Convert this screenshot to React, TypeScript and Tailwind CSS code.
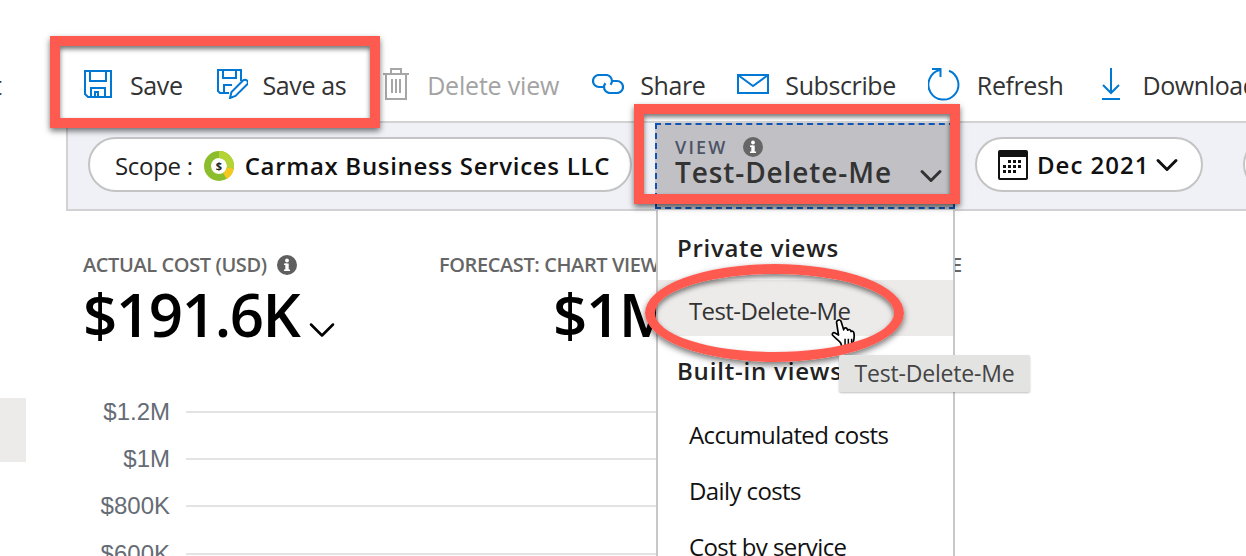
import { ChevronDown } from "lucide-react";

const blue = "#0078d4";

function SaveIcon() {
  return (
    <svg width="28" height="28" viewBox="0 0 28 28" fill="none" stroke={blue} strokeWidth="2">
      <path d="M1 1h26v26H4l-3-3z" />
      <path d="M6 1v10h16V1" />
      <path d="M7 27v-9h14v9" />
      <path d="M11 27v-5h3v5" />
    </svg>
  );
}

function SaveAsIcon() {
  return (
    <svg width="31" height="30" viewBox="0 0 31 30" fill="none" stroke={blue} strokeWidth="2">
      <path d="M12 24H3l-2-2V1h23v11" />
      <path d="M6 1v8h13V1" />
      <path d="M7 24v-8h8" />
      <path d="M13 29l1.500-6L26 11.500a2.800 2.800 0 0 1 4 4L18.500 27z" />
    </svg>
  );
}

function TrashIcon() {
  return (
    <svg width="26" height="32" viewBox="0 0 26 32" fill="none" stroke="#a6a6a6" strokeWidth="2">
      <path d="M0 6h26" />
      <path d="M8 6V1h10v5" />
      <path d="M3 6v25h20V6" />
      <path d="M9 11v14M13 11v14M17 11v14" />
    </svg>
  );
}

function ShareIcon() {
  return (
    <svg width="32" height="20" viewBox="0 0 32 20" fill="none" stroke={blue} strokeWidth="2.2">
      <path d="M12 13H7a6 6 0 0 1 0-12h7a6 6 0 0 1 6 6c0 1.500-.6 2.800-1.500 3.800" />
      <path d="M20 7h5a6 6 0 0 1 0 12h-7a6 6 0 0 1-6-6c0-1.500.6-2.800 1.500-3.800" />
    </svg>
  );
}

function MailIcon() {
  return (
    <svg width="32" height="20" viewBox="0 0 32 20" fill="none" stroke={blue} strokeWidth="2">
      <rect x="1" y="1" width="30" height="18" />
      <path d="M1 1l15 11L31 1" />
    </svg>
  );
}

function RefreshIcon() {
  return (
    <svg width="33" height="33" viewBox="0 0 33 33" fill="none" stroke={blue} strokeWidth="2">
      <path d="M21 2.700A15 15 0 1 1 12 2" />
      <path d="M4 1h8.500v8" />
    </svg>
  );
}

function DownloadIcon() {
  return (
    <svg width="20" height="32" viewBox="0 0 20 32" fill="none" stroke={blue} strokeWidth="2">
      <path d="M10 0v25" />
      <path d="M2 17l8 8 8-8" />
      <path d="M1 31h18" />
    </svg>
  );
}

function CalendarIcon() {
  return (
    <svg width="30" height="30" viewBox="0 0 30 30">
      <rect x="0" y="0" width="30" height="30" rx="2" fill="#111" />
      <rect x="2" y="7" width="26" height="21" fill="#fff" />
      <g fill="#111">
        <rect x="10" y="10" width="3" height="3" />
        <rect x="15" y="10" width="3" height="3" />
        <rect x="20" y="10" width="3" height="3" />
        <rect x="5" y="15" width="3" height="3" />
        <rect x="10" y="15" width="3" height="3" />
        <rect x="15" y="15" width="3" height="3" />
        <rect x="20" y="15" width="3" height="3" />
        <rect x="5" y="20" width="3" height="3" />
        <rect x="10" y="20" width="3" height="3" />
        <rect x="15" y="20" width="3" height="3" />
      </g>
    </svg>
  );
}

function InfoIcon({ color = "#666" }: { color?: string }) {
  return (
    <svg width="20" height="20" viewBox="0 0 20 20">
      <circle cx="10" cy="10" r="10" fill={color} />
      <rect x="8.300" y="8.500" width="3.400" height="7.500" fill="#fff" />
      <rect x="7" y="8.500" width="3" height="1.500" fill="#fff" />
      <rect x="7" y="14.500" width="6" height="1.500" fill="#fff" />
      <circle cx="10" cy="5.500" r="1.900" fill="#fff" />
    </svg>
  );
}

function ScopeIcon() {
  return (
    <svg width="30" height="30" viewBox="0 0 30 30" className="shrink-0">
      <circle cx="15" cy="15" r="11.500" fill="none" stroke="#8cbd2c" strokeWidth="7" />
      <path d="M15 3.500A11.500 11.500 0 0 1 26.300 17" fill="none" stroke="#b4d334" strokeWidth="7" />
      <path d="M26.300 17A11.500 11.500 0 0 1 21 25" fill="none" stroke="#f6c81f" strokeWidth="7" />
      <text x="15" y="19" textAnchor="middle" fontSize="11" fontWeight="700" fill="#222">
        $
      </text>
    </svg>
  );
}

function HandCursor() {
  return (
    <svg width="30" height="34" viewBox="0 0 32 36">
      <path
        d="M7 2.500c1.500-1.200 3.300-.6 3.800 1l2.700 9 .5-1.500c1-1 2.600-.8 3.200.4l.6 1.400c.8-1 2.500-.9 3.100.3l.5 1.200c1-.7 2.500-.3 2.900 1 .8 3.500.5 7.500-1 11l-1.300 4H11.500l-1-3.500C8 23 4 21 1.800 18.300c-1-1.500.4-3.300 2-2.700l4.200 2.400L6 5c-.2-1 .2-2 1-2.500z"
        fill="#fff"
        stroke="#000"
        strokeWidth="1.800"
        strokeLinejoin="round"
      />
      <path d="M15 22v7M18.500 22v7M22 22v7" stroke="#000" strokeWidth="1.600" />
    </svg>
  );
}

function ToolItem({
  icon,
  label,
  gap,
  disabled,
}: {
  icon: React.ReactNode;
  label: string;
  gap: string;
  disabled?: boolean;
}) {
  return (
    <div className={`flex items-center shrink-0 ${gap}`}>
      <span className="mb-[3px] flex">{icon}</span>
      <span className={disabled ? "text-[#a3a3a3] tracking-[-0.2px]" : "text-[#333]"}>{label}</span>
    </div>
  );
}

const yLabels = ["$1.2M", "$1M", "$800K", "$600K"];
const builtIn = ["Accumulated costs", "Daily costs", "Cost by service"];

export default function App() {
  return (
    <div className="relative w-[1246px] h-[556px] overflow-hidden bg-white font-['Open_Sans','Noto_Sans',sans-serif]">
      {/* command bar */}
      <div className="flex items-center h-[121px] pt-[50px] text-[25px] tracking-[-0.4px] whitespace-nowrap">
        <div className="w-[84px] shrink-0 overflow-hidden text-[#333]">
          <span className="block -ml-[7px]">t</span>
        </div>
        <ToolItem icon={<SaveIcon />} label="Save" gap="gap-[18px]" />
        <div className="ml-[34px]">
          <ToolItem icon={<SaveAsIcon />} label="Save as" gap="gap-[15px]" />
        </div>
        <div className="ml-[37px]">
          <ToolItem icon={<TrashIcon />} label="Delete view" gap="gap-[18px]" disabled />
        </div>
        <div className="ml-[33px]">
          <ToolItem icon={<ShareIcon />} label="Share" gap="gap-[16px]" />
        </div>
        <div className="ml-[32px]">
          <ToolItem icon={<MailIcon />} label="Subscribe" gap="gap-[16px]" />
        </div>
        <div className="ml-[32px]">
          <ToolItem icon={<RefreshIcon />} label="Refresh" gap="gap-[16px]" />
        </div>
        <div className="ml-[38px]">
          <ToolItem icon={<DownloadIcon />} label="Download" gap="gap-[21px]" />
        </div>
      </div>

      {/* filter bar */}
      <div className="flex items-center ml-[66px] w-[1180px] h-[90px] pl-[20px] bg-[#f0f1f6] border-2 border-r-0 border-[#d2d2d2] whitespace-nowrap overflow-hidden">
        <div className="flex items-center shrink-0 w-[544px] h-[55px] mb-[3px] pl-[25px] pt-[2px] rounded-full bg-white border-2 border-[#c4c4c4] text-[24px] text-[#222]">
          <span className="tracking-[-0.3px]">Scope :</span>
          <span className="ml-[11px] flex">
            <ScopeIcon />
          </span>
          <span className="ml-[11px] font-semibold tracking-[0.7px] text-[#111]">Carmax Business Services LLC</span>
        </div>
        <div className="shrink-0 ml-[23px] w-[300px] h-[86px] bg-[#c1c0c5] border-2 border-dashed border-[#0f54b4] pl-[18px] pt-[10px]">
          <div className="flex items-center h-[24px] text-[18px] font-semibold tracking-[2.200px] text-[#4c5466]">
            VIEW
            <span className="ml-[15px] flex">
              <InfoIcon />
            </span>
          </div>
          <div className="flex items-center h-[30px] -mt-[2px] text-[28px] font-semibold tracking-[0.9px] text-[#333]">
            <span>Test-Delete-Me</span>
            <ChevronDown className="ml-auto mr-[4px] mt-[8px] size-[36px] text-[#333]" strokeWidth={2} />
          </div>
        </div>
        <div className="flex items-center shrink-0 ml-[20px] w-[228px] h-[55px] mb-[3px] pl-[21px] pt-[1px] rounded-full bg-white border-2 border-[#c4c4c4] text-[24px] font-semibold tracking-[1px] text-[#111]">
          <CalendarIcon />
          <span className="ml-[9px]">Dec 2021</span>
          <ChevronDown className="size-[36px]" strokeWidth={2} />
        </div>
        <div className="shrink-0 ml-[40px] w-[100px] h-[55px] mb-[3px] rounded-full bg-white border-2 border-[#c4c4c4]" />
      </div>

      {/* totals */}
      <div className="flex h-[177px] pt-[43px] pl-[83px] whitespace-nowrap">
        <div className="w-[356px] shrink-0">
          <div className="flex items-center h-[22px] text-[20px] font-semibold tracking-[-0.4px] text-[#666]">
            ACTUAL COST (USD)
            <span className="ml-[10px] flex">
              <InfoIcon color="#5f5f5f" />
            </span>
          </div>
          <div className="flex items-center h-[76px] text-[60px] font-semibold tracking-[-1.400px] text-black">
            $191.6K
            <ChevronDown className="ml-[1px] mt-[32px] size-[44px]" strokeWidth={1.400} />
          </div>
        </div>
        <div className="w-[379px] shrink-0">
          <div className="flex items-center h-[22px] text-[20px] font-semibold tracking-[-0.4px] text-[#666]">
            FORECAST: CHART VIEW ON
          </div>
          <div className="flex items-center h-[76px] pl-[114px] text-[60px] font-semibold tracking-[-1.400px] text-black">
            $1M
          </div>
        </div>
        <div className="flex items-center h-[22px] text-[20px] font-semibold tracking-[-0.4px] text-[#666]">
          BUDGET: NONE
        </div>
      </div>

      {/* chart */}
      <div className="flex">
        <div className="w-[26px] h-[64px] mt-[10px] shrink-0 bg-[#edebe9]" />
        <div className="w-[630px] shrink-0">
          {yLabels.map((label) => (
            <div key={label} className="flex items-center h-[47.300px]">
              <span className="w-[144px] shrink-0 text-right font-['Liberation_Sans',sans-serif] text-[24px] text-[#666c75]">
                {label}
              </span>
              <div className="ml-[16px] flex-1 h-[2px] bg-[#e3e3e3]" />
            </div>
          ))}
        </div>
      </div>

      {/* views dropdown */}
      <div className="absolute left-[656px] top-[210px] w-[299px] h-[346px] bg-white border-x-2 border-[#c8c8c8] text-[24px] whitespace-nowrap">
        <div className="h-[36px] mt-[20px] ml-[19px] flex items-center font-semibold tracking-[0.7px] text-[#222]">
          Private views
        </div>
        <div className="mt-[14px] h-[56px] pl-[31px] pt-[5px] flex items-center bg-[#edebe9] tracking-[-0.6px] text-[#333]">
          Test-Delete-Me
        </div>
        <div className="h-[36px] mt-[17px] ml-[19px] flex items-center font-semibold tracking-[0.8px] text-[#222]">
          Built-in views
        </div>
        <div className="mt-[18px]">
          {builtIn.map((item) => (
            <div key={item} className="h-[56px] pl-[31px] flex items-center tracking-[-0.6px] text-[#111]">
              {item}
            </div>
          ))}
        </div>
      </div>

      {/* annotations */}
      <div className="absolute left-[831px] top-[318px]">
        <HandCursor />
      </div>
      <div className="absolute left-[50px] top-[36px] w-[330px] h-[92px] border-[10px] border-[#ff5a4f] shadow-[0_3px_6px_rgba(0,0,0,0.55),inset_0_3px_5px_rgba(0,0,0,0.55)]" />
      <div className="absolute left-[634px] top-[104px] w-[326px] h-[100px] border-[10px] border-[#ff5a4f] shadow-[0_3px_6px_rgba(0,0,0,0.55),inset_0_3px_5px_rgba(0,0,0,0.55)]" />
      <div className="absolute left-[645px] top-[264px] w-[259px] h-[98px] rounded-[50%] border-[10px] border-[#ff5a4f] shadow-[0_3px_6px_rgba(0,0,0,0.55),inset_0_3px_5px_rgba(0,0,0,0.5)]" />
      <div className="absolute left-[839px] top-[355px] w-[191px] h-[37px] flex items-center justify-center rounded-[2px] bg-[#e3e3e2] shadow-[0_1px_2px_rgba(0,0,0,0.25)] text-[23px] tracking-[-0.2px] text-[#444] whitespace-nowrap">
        Test-Delete-Me
      </div>
    </div>
  );
}
